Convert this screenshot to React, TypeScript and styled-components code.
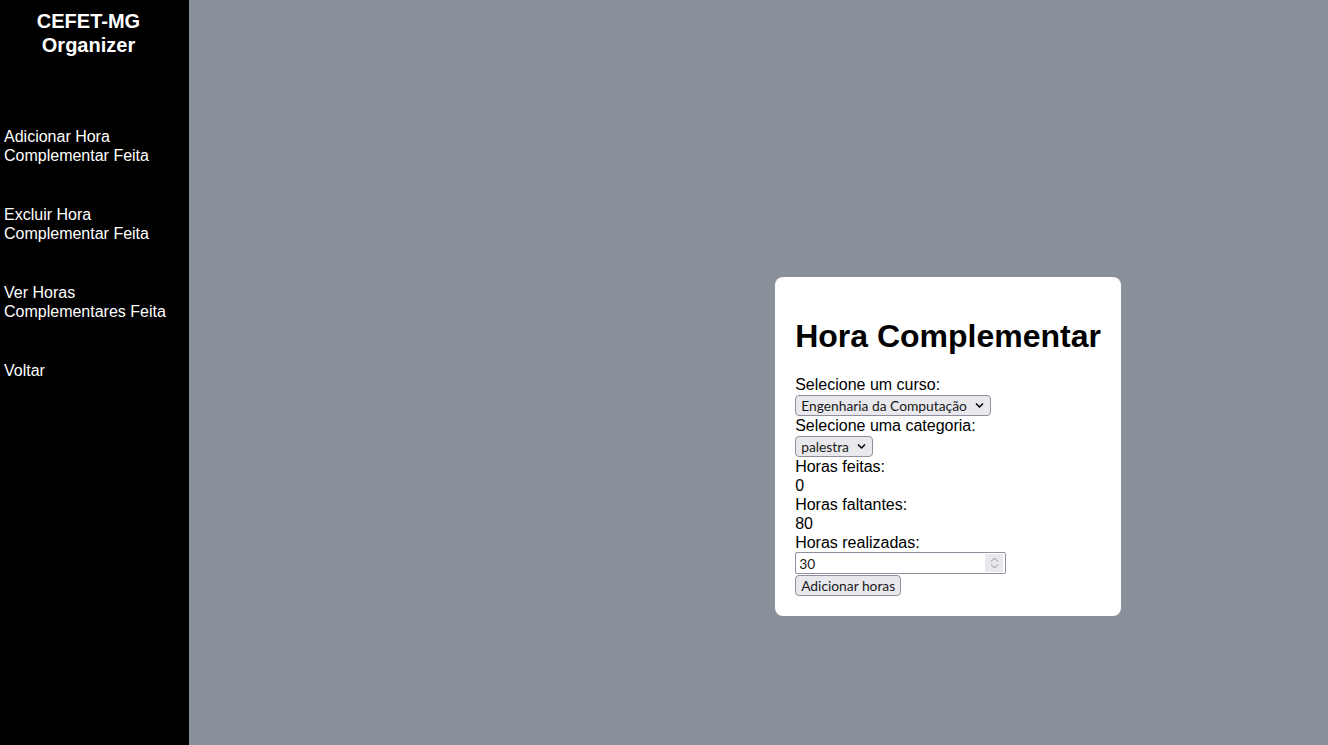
import React, { useState } from "react";
import styled, { createGlobalStyle } from "styled-components";

const Global = createGlobalStyle`
  html, body { margin: 0; padding: 0; }
  body { font-family: "Liberation Sans", Arial, sans-serif; }
`;

const Page = styled.div`
  display: flex;
  width: 1328px;
  height: 745px;
  overflow: hidden;
`;

const Sidebar = styled.nav`
  width: 189px;
  flex: none;
  height: 100%;
  background: #000;
  color: #fff;
  display: flex;
  flex-direction: column;
  padding-top: 9px;
  box-sizing: border-box;
`;

const Brand = styled.h2`
  margin: 0;
  font-size: 20px;
  line-height: 24px;
  font-weight: bold;
  text-align: center;
  padding: 0 12px 0 0;
`;

const Menu = styled.ul`
  list-style: none;
  margin: 70px 0 0;
  padding: 0;
  display: flex;
  flex-direction: column;
  gap: 40px;
`;

const MenuItem = styled.li`
  font-size: 16px;
  line-height: 19px;
  padding-left: 4px;
  padding-right: 20px;
  color: #fff;
`;

const Main = styled.main`
  flex: 1;
  background: #8a9099;
  display: flex;
  justify-content: flex-end;
  align-items: flex-start;
  padding: 277px 207px 0 0;
  box-sizing: border-box;
`;

const Card = styled.section`
  background: #fff;
  border-radius: 8px;
  padding: 20px;
  display: flex;
  flex-direction: column;
  align-items: flex-start;
  color: #000;
`;

const Title = styled.h1`
  font-size: 32px;
  line-height: 37px;
  font-weight: bold;
  margin: 21px 0 20px;
`;

const Text = styled.div`
  font-size: 16px;
  line-height: 19px;
`;

const controlFont = `
  font-family: Lato, "Noto Sans", sans-serif;
  font-size: 13.8px;
  color: #1a1a1a;
`;

const SelectBox = styled.label`
  position: relative;
  display: inline-flex;
  align-items: center;
  height: 21px;
  box-sizing: border-box;
  margin-top: 1px;
  border: 1px solid #8f8f9d;
  border-radius: 4px;
  background: #e9e9ed;
`;

const Select = styled.select`
  ${controlFont}
  appearance: none;
  border: none;
  background: transparent;
  height: 19px;
  line-height: 19px;
  padding: 0 23px 0 5px;
  margin: 0;
  outline: none;
`;

const Chevron = styled.svg`
  position: absolute;
  right: 6px;
  top: 6px;
  pointer-events: none;
`;

const NumberBox = styled.div`
  display: flex;
  align-items: stretch;
  width: 211px;
  height: 22px;
  box-sizing: border-box;
  border: 1px solid #8f8f9d;
  border-radius: 2px;
  background: #fff;
  padding: 1px 2px 1px 0;
`;

const NumberField = styled.input`
  ${controlFont}
  flex: 1;
  min-width: 0;
  border: none;
  outline: none;
  padding: 0 0 0 3px;
  margin: 0;
  background: transparent;
`;

const Spinner = styled.div`
  width: 18px;
  background: #e9e9ed;
  display: flex;
  flex-direction: column;
  align-items: center;
  justify-content: center;
  gap: 2px;
`;

const Button = styled.button`
  ${controlFont}
  height: 21px;
  box-sizing: border-box;
  margin-top: 1px;
  padding: 0 5px;
  border: 1px solid #8f8f9d;
  border-radius: 4px;
  background: #e9e9ed;
  line-height: 19px;
`;

const Down = () => (
  <Chevron width="9" height="7" viewBox="0 0 9 7">
    <path d="M1 1.5 L4.5 5 L8 1.5" fill="none" stroke="#000" strokeWidth="1.5" />
  </Chevron>
);

export default function App() {
  const [hours, setHours] = useState("30");
  return (
    <>
      <Global />
      <Page>
        <Sidebar>
          <Brand>
            CEFET-MG
            <br />
            Organizer
          </Brand>
          <Menu>
            <MenuItem>Adicionar Hora Complementar Feita</MenuItem>
            <MenuItem>Excluir Hora Complementar Feita</MenuItem>
            <MenuItem>Ver Horas Complementares Feita</MenuItem>
            <MenuItem>Voltar</MenuItem>
          </Menu>
        </Sidebar>
        <Main>
          <Card>
            <Title>Hora Complementar</Title>
            <Text>Selecione um curso:</Text>
            <SelectBox>
              <Select defaultValue="eng">
                <option value="eng">Engenharia da Computação</option>
              </Select>
              <Down />
            </SelectBox>
            <Text>Selecione uma categoria:</Text>
            <SelectBox>
              <Select defaultValue="palestra">
                <option value="palestra">palestra</option>
              </Select>
              <Down />
            </SelectBox>
            <Text>Horas feitas:</Text>
            <Text>0</Text>
            <Text>Horas faltantes:</Text>
            <Text>80</Text>
            <Text>Horas realizadas:</Text>
            <NumberBox>
              <NumberField
                type="text"
                inputMode="numeric"
                value={hours}
                onChange={(e) => setHours(e.target.value)}
              />
              <Spinner>
                <svg width="9" height="5" viewBox="0 0 9 5">
                  <path d="M1 4.5 L4.5 1 L8 4.5" fill="none" stroke="#8f8f9d" strokeWidth="1" />
                </svg>
                <svg width="9" height="5" viewBox="0 0 9 5">
                  <path d="M1 0.5 L4.5 4 L8 0.5" fill="none" stroke="#8f8f9d" strokeWidth="1" />
                </svg>
              </Spinner>
            </NumberBox>
            <Button>Adicionar horas</Button>
          </Card>
        </Main>
      </Page>
    </>
  );
}
